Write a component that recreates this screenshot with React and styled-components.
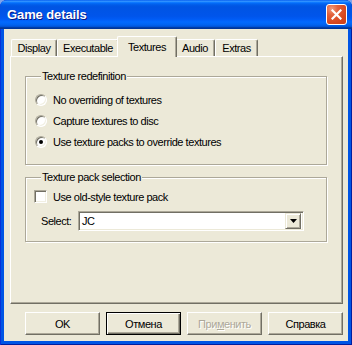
import React from "react";
import styled, { createGlobalStyle } from "styled-components";

const GlobalStyle = createGlobalStyle`
  html, body {
    margin: 0;
    padding: 0;
    background: #7fa4ea;
  }
  body {
    width: 352px;
    height: 345px;
    overflow: hidden;
    font-family: Tahoma, "Liberation Sans", Arial, sans-serif;
    font-size: 11px;
    letter-spacing: -0.45px;
    color: #000;
  }
`;

const Frame = styled.div`
  width: 352px;
  height: 345px;
  box-sizing: border-box;
  display: flex;
  flex-direction: column;
  border-radius: 7px 7px 0 0;
  overflow: hidden;
  background: #0055e5;
  box-shadow: inset 1px 0 #0831d9, inset -1px 0 #001ea0, inset 0 -1px #001ea0;
`;

const TitleBar = styled.div`
  height: 29px;
  flex: none;
  display: flex;
  align-items: center;
  justify-content: space-between;
  padding: 0 5px 0 7px;
  background: linear-gradient(
    to bottom,
    #0058ee 0%,
    #3593ff 4%,
    #288eff 6%,
    #127dff 8%,
    #036ffc 10%,
    #0262ee 14%,
    #0057e5 20%,
    #0054e3 24%,
    #0055eb 56%,
    #005bf5 66%,
    #026afe 76%,
    #0062ef 86%,
    #0052d6 92%,
    #0040ab 94%,
    #003092 100%
  );
`;

const Title = styled.span`
  font-family: "Liberation Sans", Arial, sans-serif;
  font-weight: bold;
  font-size: 13px;
  color: #fff;
  text-shadow: 1px 1px #0a1883;
  letter-spacing: -0.1px;
`;

const CloseButton = styled.div`
  width: 21px;
  height: 21px;
  box-sizing: border-box;
  border: 1px solid #fff;
  border-radius: 3px;
  display: flex;
  align-items: center;
  justify-content: center;
  background: radial-gradient(circle at 25% 20%, #f09a7a 0%, #e2603a 30%, #d8461d 70%, #c8401a 100%);
`;

const Client = styled.div`
  flex: 1;
  margin: 0 4px 4px 4px;
  background: #ece9d8;
  padding: 7px 5px 0 6px;
  display: flex;
  flex-direction: column;
`;

const TabRow = styled.div`
  height: 20px;
  display: flex;
  align-items: flex-end;
  padding-left: 1px;
  position: relative;
  z-index: 1;
`;

const Tab = styled.div`
  box-sizing: border-box;
  width: ${(p) => p.$w}px;
  height: ${(p) => (p.$active ? 21 : 17)}px;
  margin: 0 ${(p) => (p.$active ? -2 : 0)}px ${(p) => (p.$active ? -1 : 0)}px;
  padding-top: ${(p) => (p.$active ? 3 : 1)}px;
  background: #ece9d8;
  border-top: 1px solid #fff;
  border-left: 1px solid #fff;
  border-right: 1px solid #716f64;
  border-radius: 2px 2px 0 0;
  box-shadow: inset -1px 0 #aca899;
  text-align: center;
  line-height: 14px;
  position: relative;
  z-index: ${(p) => (p.$active ? 2 : 1)};
`;

const Panel = styled.div`
  width: 333px;
  height: 248px;
  box-sizing: border-box;
  border-top: 1px solid #fff;
  border-left: 1px solid #fff;
  border-right: 1px solid #716f64;
  border-bottom: 1px solid #716f64;
  box-shadow: inset -1px -1px #aca899;
  padding: 12px 0 0 14px;
  display: flex;
  flex-direction: column;
`;

const Group = styled.fieldset`
  box-sizing: border-box;
  width: 302px;
  height: ${(p) => p.$h}px;
  margin: ${(p) => p.$mt}px 0 0 0;
  padding: ${(p) => p.$pt}px 0 0 9px;
  border: 1px solid #aca899;
  box-shadow: inset 1px 1px #fff, 1px 1px #fff;
  min-inline-size: 0;
`;

const Legend = styled.legend`
  padding: 0 1px;
  margin-left: 6px;
  line-height: 14px;
  background: #ece9d8;
`;

const OptionRow = styled.label`
  height: 21px;
  display: flex;
  align-items: center;
  gap: 6px;
`;

const Radio = styled.span`
  width: 12px;
  height: 12px;
  box-sizing: border-box;
  border-radius: 50%;
  background: #fff;
  border: 1px solid;
  border-color: #aca899 #fff #fff #aca899;
  box-shadow: inset 1px 1px #716f64, inset -1px -1px #f1efe2;
  display: flex;
  align-items: center;
  justify-content: center;
  &::after {
    content: "";
    width: 4px;
    height: 4px;
    border-radius: 50%;
    background: #000;
    display: ${(p) => (p.$checked ? "block" : "none")};
  }
`;

const Checkbox = styled.span`
  width: 13px;
  height: 13px;
  box-sizing: border-box;
  background: #fff;
  border: 1px solid;
  border-color: #aca899 #fff #fff #aca899;
  box-shadow: inset 1px 1px #716f64, inset -1px -1px #f1efe2;
  margin-left: -1px;
`;

const SelectRow = styled.div`
  display: flex;
  align-items: center;
  margin-top: 4px;
`;

const SelectLabel = styled.span`
  width: 37px;
  padding-left: 6px;
`;

const Combo = styled.div`
  width: 226px;
  height: 20px;
  box-sizing: border-box;
  background: #fff;
  border: 1px solid;
  border-color: #aca899 #fff #fff #aca899;
  box-shadow: inset 1px 1px #716f64, inset -1px -1px #ece9d8;
  display: flex;
  align-items: center;
  justify-content: space-between;
  padding: 2px 2px 2px 3px;
`;

const DropButton = styled.div`
  width: 16px;
  height: 16px;
  box-sizing: border-box;
  background: #ece9d8;
  border-top: 1px solid #ece9d8;
  border-left: 1px solid #ece9d8;
  border-right: 1px solid #716f64;
  border-bottom: 1px solid #716f64;
  box-shadow: inset 1px 1px #fff, inset -1px -1px #aca899;
  display: flex;
  align-items: center;
  justify-content: center;
`;

const ButtonRow = styled.div`
  display: flex;
  gap: 6px;
  margin-top: 8px;
  padding-left: 15px;
`;

const Button = styled.div`
  width: 75px;
  height: 23px;
  box-sizing: border-box;
  display: flex;
  align-items: center;
  justify-content: center;
  background: #ece9d8;
  border: 1px solid;
  border-color: ${(p) => (p.$default ? "#000" : "#fff #716f64 #716f64 #fff")};
  box-shadow: ${(p) =>
    p.$default
      ? "inset 1px 1px #fff, inset -1px -1px #716f64, inset -2px -2px #aca899"
      : "inset -1px -1px #aca899"};
  color: ${(p) => (p.$disabled ? "#aca899" : "#000")};
  text-shadow: ${(p) => (p.$disabled ? "1px 1px #fff" : "none")};
`;

const Key = styled.span`
  text-decoration: underline;
`;

const tabs = [
  { label: "Display", w: 46 },
  { label: "Executable", w: 62 },
  { label: "Textures", w: 60, active: true },
  { label: "Audio", w: 40 },
  { label: "Extras", w: 43 },
];

const options = [
  "No overriding of textures",
  "Capture textures to disc",
  "Use texture packs to override textures",
];

export default function App() {
  return (
    <>
      <GlobalStyle />
      <Frame>
        <TitleBar>
          <Title>Game details</Title>
          <CloseButton>
            <svg width="11" height="11" viewBox="0 0 11 11">
              <path d="M1.5 1.5 L9.5 9.5 M9.5 1.5 L1.5 9.5" stroke="#fff" strokeWidth="2.2" strokeLinecap="square" />
            </svg>
          </CloseButton>
        </TitleBar>
        <Client>
          <TabRow>
            {tabs.map((t) => (
              <Tab key={t.label} $w={t.w} $active={t.active}>
                {t.label}
              </Tab>
            ))}
          </TabRow>
          <Panel>
            <Group $h={96} $mt={0} $pt={6}>
              <Legend>Texture redefinition</Legend>
              {options.map((o, i) => (
                <OptionRow key={o}>
                  <Radio $checked={i === 2} />
                  {o}
                </OptionRow>
              ))}
            </Group>
            <Group $h={72} $mt={5} $pt={2}>
              <Legend>Texture pack selection</Legend>
              <OptionRow>
                <Checkbox />
                Use old-style texture pack
              </OptionRow>
              <SelectRow>
                <SelectLabel>Select:</SelectLabel>
                <Combo>
                  <span>JC</span>
                  <DropButton>
                    <svg width="7" height="4" viewBox="0 0 7 4">
                      <path d="M0 0 H7 L3.5 4 Z" fill="#000" />
                    </svg>
                  </DropButton>
                </Combo>
              </SelectRow>
            </Group>
          </Panel>
          <ButtonRow>
            <Button>OK</Button>
            <Button $default>Отмена</Button>
            <Button $disabled>
              При<Key>м</Key>енить
            </Button>
            <Button>Справка</Button>
          </ButtonRow>
        </Client>
      </Frame>
    </>
  );
}
